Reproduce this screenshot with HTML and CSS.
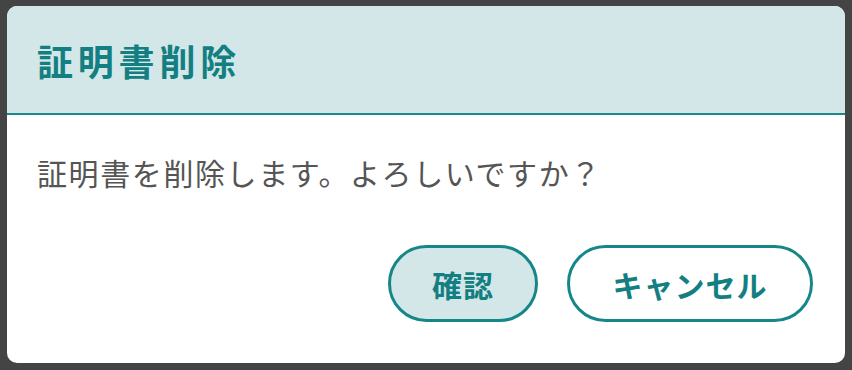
FILE: index.html
```html
<!DOCTYPE html>
<html lang="ja">
<head>
<meta charset="utf-8">
<title>証明書削除</title>
<link rel="stylesheet" href="styles.css">
</head>
<body>
<div class="dialog">
  <div class="dialog-header">
    <h1 class="dialog-title">証明書削除</h1>
  </div>
  <div class="dialog-body">
    <p class="dialog-message">証明書を削除します。よろしいですか？</p>
    <div class="dialog-actions">
      <button class="btn btn-primary">確認</button>
      <button class="btn btn-secondary">キャンセル</button>
    </div>
  </div>
</div>
</body>
</html>
```
FILE: styles.css
```css
html, body {
  margin: 0;
  padding: 0;
  background: #444444;
}
body {
  width: 852px;
  height: 370px;
  box-sizing: border-box;
  padding: 6px 7px 7px 7px;
  font-family: "Noto Sans CJK JP", "Noto Sans", sans-serif;
}
.dialog {
  width: 838px;
  height: 357px;
  background: #ffffff;
  border-radius: 10px;
  overflow: hidden;
  display: flex;
  flex-direction: column;
}
.dialog-header {
  height: 107px;
  background: #d4e7e8;
  border-bottom: 2px solid #178a8b;
  display: flex;
  align-items: center;
  padding-left: 30px;
}
.dialog-title {
  margin: 0;
  font-size: 36px;
  font-weight: 700;
  letter-spacing: 4.8px;
  color: #137f82;
  line-height: 1;
}
.dialog-body {
  flex: 1;
  display: flex;
  flex-direction: column;
  padding: 37px 32px 41px 30px;
}
.dialog-message {
  margin: 0;
  height: 40px;
  line-height: 40px;
  font-size: 30px;
  letter-spacing: 1.6px;
  color: #555555;
}
.dialog-actions {
  margin-top: auto;
  display: flex;
  justify-content: flex-end;
  gap: 29px;
}
.btn {
  height: 77px;
  box-sizing: border-box;
  border: 3px solid #168788;
  border-radius: 40px;
  padding: 0 40px;
  font-family: "Noto Sans CJK JP", "Noto Sans", sans-serif;
  font-size: 30px;
  font-weight: 700;
  color: #137f82;
  line-height: 1;
  letter-spacing: 1px;
}
.btn-primary {
  width: 150px;
  background: #d4e7e8;
}
.btn-secondary {
  width: 246px;
  background: #ffffff;
}
```
